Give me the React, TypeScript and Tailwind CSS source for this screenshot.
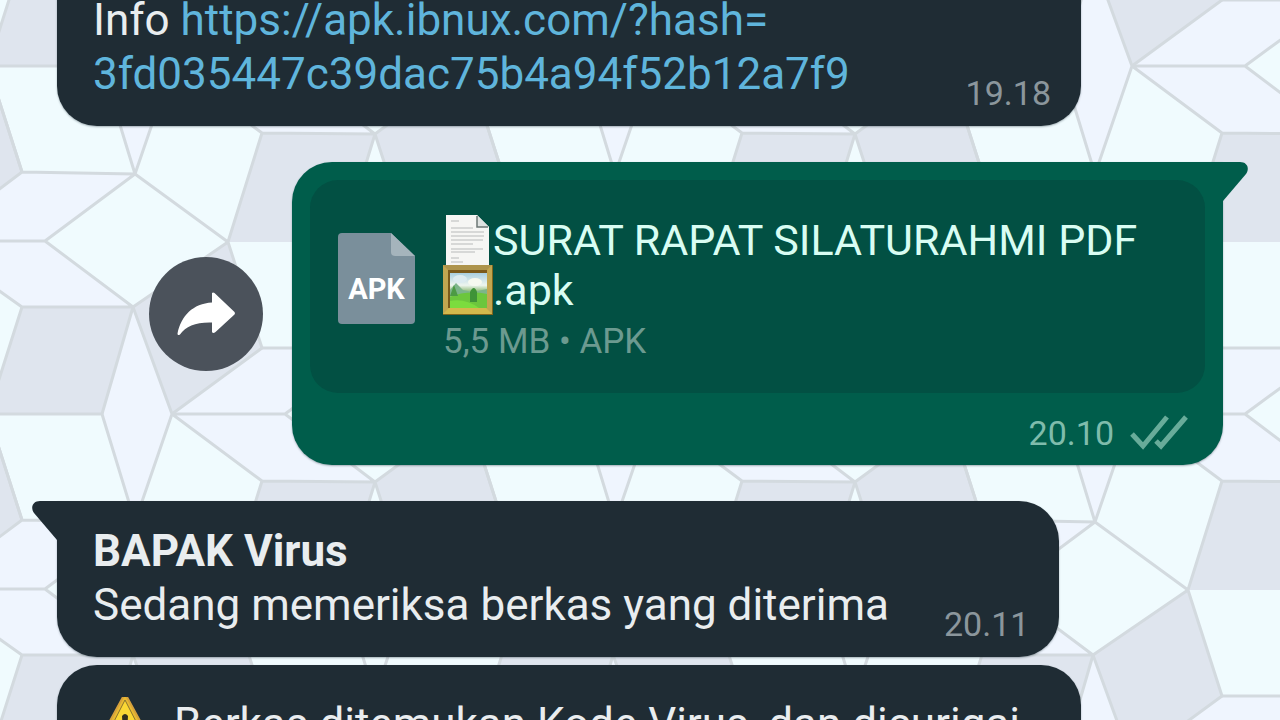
import { ReactNode } from "react";

type Side = "in" | "out";

const TILE_W = 480;
const TILE_H = 348;

const tileFaces = [
  { fill: "#f0fbfe", points: "-12,66 102,66 135,174 22,172" },
  { fill: "#eff5fe", points: "133,-41 172,66 135,174 102,66" },
  { fill: "#f0fbfe", points: "172,66 262,133 228,242 135,174" },
  { fill: "#eff5fe", points: "22,172 135,174 45,241 -70,242" },
  { fill: "#f0fbfe", points: "135,174 228,242 133,307 45,241" },
  { fill: "#eff5fe", points: "45,241 133,307 22,307 -70,242" },
  { fill: "#dfe5ee", points: "22,307 133,307 102,414 -12,414" },
  { fill: "#dfe5ee", points: "228,242 262,348 172,414 133,307" },
  { fill: "#eff5fe", points: "262,0 375,0 285,66 172,66" },
  { fill: "#eff5fe", points: "172,66 285,66 375,134 262,133" },
  { fill: "#dfe5ee", points: "262,133 375,134 342,242 228,242" },
  { fill: "#f0fbfe", points: "228,242 342,242 375,348 262,348" },
  { fill: "#f0fbfe", points: "375,134 410,242 375,348 342,242" },
  { fill: "#dfe5ee", points: "375,134 468,66 502,172 410,242" },
  { fill: "#f0fbfe", points: "410,242 502,307 468,414 375,348" },
  { fill: "#f0fbfe", points: "285,66 375,0 468,66 375,134" },
];

const tileLines =
  "M-12 66H102L135 174L22 172ZM133 -41L172 66L135 174M172 66L262 133L228 242L135 174L45 241H-70L22 172M45 241L133 307H22L-70 242M228 242L133 307L102 414M228 242L262 348L172 414M262 0H375L285 66H172M285 66L375 134L262 133M375 134L342 242L375 348L410 242L375 134L468 66L502 172M502 307L468 414L375 348";

const Wallpaper = () => (
  <svg
    className="absolute inset-0 h-full w-full"
    viewBox="0 0 1280 720"
    preserveAspectRatio="xMidYMid slice"
    aria-hidden="true"
  >
    <rect width="1280" height="720" fill="#f0fbfe" />
    {[-1, 0, 1, 2].map((col) =>
      [-1, 0, 1, 2].map((row) => (
        <g
          key={`${col}:${row}`}
          transform={`translate(${col * TILE_W} ${row * TILE_H})`}
        >
          {tileFaces.map((face) => (
            <polygon key={face.points} points={face.points} fill={face.fill} />
          ))}
        </g>
      ))
    )}
    {[-1, 0, 1, 2].map((col) =>
      [-1, 0, 1, 2].map((row) => (
        <path
          key={`${col}:${row}`}
          d={tileLines}
          transform={`translate(${col * TILE_W} ${row * TILE_H})`}
          fill="none"
          stroke="#d3dadf"
          strokeWidth="3"
          strokeLinejoin="round"
        />
      ))
    )}
  </svg>
);

const Tail = ({ side }: { side: Side }) =>
  side === "out" ? (
    <svg
      className="absolute top-0 left-full h-10 w-[26px] text-[#005d4b]"
      viewBox="0 0 26 40"
      aria-hidden="true"
    >
      <path d="M-1 0H17C24 0 27 6 23 12L0 39H-1Z" fill="currentColor" />
    </svg>
  ) : (
    <svg
      className="absolute top-0 right-full h-10 w-[26px] text-[#1f2c34]"
      viewBox="0 0 26 40"
      aria-hidden="true"
    >
      <path d="M27 0H9C2 0 -1 6 3 12L26 39H27Z" fill="currentColor" />
    </svg>
  );

const ForwardIcon = () => (
  <svg className="h-11 w-[60px]" viewBox="0 0 60 44" aria-hidden="true">
    <path
      d="M36 1Q37 0 38.500 1L58.500 20Q59.500 21 58.500 22.500L39.500 40Q37 42 36 40V30.500C20 30 10 34 4 42.500Q1.500 44 1.500 41.500C5 24 17 11.500 36 10.500Z"
      fill="#fff"
    />
  </svg>
);

const FileIcon = ({ label }: { label: string }) => (
  <span className="relative block h-[92px] w-[77px] shrink-0">
    <svg className="h-full w-full" viewBox="0 0 77 92" aria-hidden="true">
      <path
        d="M4 0H53L77 23V87Q77 91 73 91H4Q0 91 0 87V4Q0 0 4 0Z"
        fill="#7a8f9b"
      />
      <path d="M53 0L77 23H57Q53 23 53 19Z" fill="#a5b4bc" />
    </svg>
    <span className="absolute inset-x-0 top-10 text-center text-[29px] leading-8 font-bold text-white">
      {label}
    </span>
  </span>
);

const PageEmoji = () => (
  <svg
    className="inline-block h-[50px] w-[50px] align-top"
    viewBox="0 0 50 50"
    role="img"
    aria-label="page"
  >
    <path d="M3 0H34L46 12V50H3Z" fill="#f6f6f4" />
    <path d="M34 0L46 12H34Z" fill="#dfe3e2" />
    <path d="M34 1V12H45" fill="none" stroke="#6d7876" strokeWidth="1.500" />
    <path
      d="M8 6H16M8 13H30M8 17H41M8 21H41M8 25H40M8 29H30M8 34H40M8 37H32M8 43H16M8 47H20"
      stroke="#b8bab9"
      strokeWidth="1.200"
    />
  </svg>
);

const PictureEmoji = () => (
  <svg
    className="inline-block h-[50px] w-[50px] align-top"
    viewBox="0 0 50 50"
    role="img"
    aria-label="framed picture"
  >
    <defs>
      <linearGradient id="sky" x1="0" y1="0" x2="0" y2="1">
        <stop offset="0" stopColor="#a9cfe0" />
        <stop offset="0.350" stopColor="#eef5ef" />
        <stop offset="0.500" stopColor="#9fc58b" />
        <stop offset="1" stopColor="#58c42c" />
      </linearGradient>
    </defs>
    <rect width="50" height="50" fill="#80661c" />
    <rect width="49" height="49" fill="#c2a650" />
    <path d="M0 0H49L43 6H6Z" fill="#ae944c" />
    <path d="M0 49H49L43 43H6Z" fill="#d3b94c" />
    <rect x="5" y="5" width="39" height="38" fill="#7b5a1b" />
    <rect x="7" y="8" width="37" height="35" fill="url(#sky)" />
    <path d="M7 25L13 18L20 25L30 27L44 24V31H7Z" fill="#7db58a" />
    <path d="M7 32Q24 25 44 29V43H7Z" fill="#6cc63d" />
    <path d="M7 31L11 20L15 31Z" fill="#4c9a44" />
    <path d="M27 37V27Q31 19 34 27V37Z" fill="#3f9338" />
    <path d="M7 43V36Q22 33 36 43Z" fill="#7bdc3e" />
    <ellipse cx="32" cy="17" rx="7" ry="4" fill="#f7f9f0" />
    <ellipse cx="17" cy="14" rx="7" ry="4" fill="#dcebf0" />
  </svg>
);

const WarningEmoji = () => (
  <svg
    className="mr-2 inline-block h-[54px] w-[62px] align-top"
    viewBox="0 0 62 54"
    role="img"
    aria-label="warning"
  >
    <path
      d="M30 0Q32 -3 34 0L59 46Q60 51 55 51H9Q4 51 5 46Z"
      fill="#e8b931"
      stroke="#d6a13c"
      strokeWidth="2"
      strokeLinejoin="round"
    />
    <path d="M32 3L54 46H10Z" fill="#fbd734" stroke="#8a7430" strokeWidth="1" />
    <path d="M29 19Q32 15 35 19L34 34H30Z" fill="#33301f" />
    <circle cx="32" cy="40" r="3" fill="#33301f" />
  </svg>
);

const ReadTicks = () => (
  <svg
    className="h-9 w-[58px]"
    viewBox="0 0 58 36"
    fill="none"
    stroke="#68ac9a"
    strokeWidth="5"
    role="img"
    aria-label="delivered"
  >
    <path d="M2 19L13 31L37 2M26 26L31 31L56 2" />
  </svg>
);

interface BubbleProps {
  side: Side;
  tail?: boolean;
  className?: string;
  children: ReactNode;
}

const Bubble = ({ side, tail = false, className = "", children }: BubbleProps) => (
  <article
    className={`relative shadow-[0_1px_2px_rgba(20,40,50,0.35)] ${
      side === "out"
        ? "rounded-[40px] rounded-tr-none bg-[#005d4b]"
        : "rounded-[40px] bg-[#1f2c34]"
    } ${tail && side === "in" ? "rounded-tl-none" : ""} ${className}`}
  >
    {tail && <Tail side={side} />}
    {children}
  </article>
);

const Time = ({ children }: { children: string }) => (
  <time className="shrink-0 text-[34px] leading-10">{children}</time>
);

export default function App() {
  return (
    <main className="relative h-screen overflow-hidden bg-[#f0fbfe] font-['Roboto',sans-serif]">
      <Wallpaper />
      <section className="relative flex flex-col items-start px-[57px]">
        <Bubble
          side="in"
          className="-mt-12 flex w-[1024px] max-w-full items-end justify-between pt-[41px] pr-[30px] pb-[25px] pl-9"
        >
          <p className="text-[44px] leading-[54px] text-[#e9edef]">
            Info{" "}
            <a
              className="text-[#5fb5dc]"
              href="https://apk.ibnux.com/?hash=3fd035447c39dac75b4a94f52b12a7f9"
            >
              https://apk.ibnux.com/?hash=
              <br />
              3fd035447c39dac75b4a94f52b12a7f9
            </a>
          </p>
          <div className="-mb-3 text-[#8b969c]">
            <Time>19.18</Time>
          </div>
        </Bubble>

        <div className="mt-9 flex items-center gap-[29px] self-end">
          <button
            type="button"
            aria-label="Forward"
            className="flex h-[114px] w-[114px] shrink-0 items-center justify-center rounded-full bg-[#4b525b]"
          >
            <ForwardIcon />
          </button>
          <Bubble side="out" tail className="w-[931px] p-[18px] pb-3">
            <div className="flex items-start gap-7 rounded-[28px] bg-[#025043] px-7 pt-[35px] pb-7">
              <div className="pt-[18px]">
                <FileIcon label="APK" />
              </div>
              <div>
                <h2 className="text-[43px] leading-[50px] text-[#d9fdf3]">
                  <PageEmoji />
                  SURAT RAPAT SILATURAHMI PDF
                  <br />
                  <PictureEmoji />
                  .apk
                </h2>
                <p className="pt-1 text-[35px] leading-[46px] text-[#6c9a90]">
                  5,5 MB • APK
                </p>
              </div>
            </div>
            <div className="mt-5 flex items-center justify-end gap-4 pr-[17px] text-[#7fbcac]">
              <Time>20.10</Time>
              <ReadTicks />
            </div>
          </Bubble>
        </div>

        <Bubble
          side="in"
          tail
          className="mt-9 flex items-end gap-[55px] pt-[23px] pr-[30px] pb-[25px] pl-9"
        >
          <div className="text-[44px] leading-[54px] text-[#e9edef]">
            <h3 className="font-bold">BAPAK Virus</h3>
            <p>Sedang memeriksa berkas yang diterima</p>
          </div>
          <div className="-mb-3 text-[#8b969c]">
            <Time>20.11</Time>
          </div>
        </Bubble>

        <Bubble
          side="in"
          className="mt-2 w-[1024px] max-w-full pt-8 pr-[30px] pb-[25px] pl-9"
        >
          <p className="text-[44px] leading-[54px] whitespace-nowrap text-[#e9edef]">
            <WarningEmoji /> Berkas ditemukan Kode Virus, dan dicurigai
          </p>
        </Bubble>
      </section>
    </main>
  );
}
